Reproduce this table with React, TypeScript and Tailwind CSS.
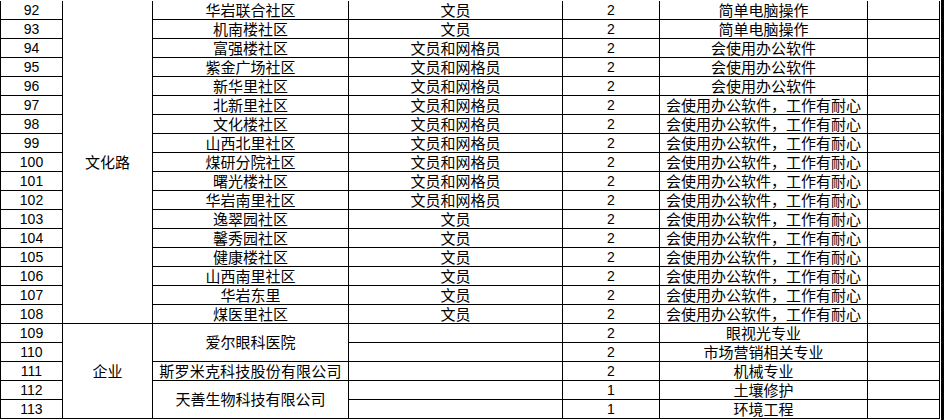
import React from 'react';

const wenhua = [
  ['92', '华岩联合社区', '文员', '2', '简单电脑操作'],
  ['93', '机南楼社区', '文员', '2', '简单电脑操作'],
  ['94', '富强楼社区', '文员和网格员', '2', '会使用办公软件'],
  ['95', '紫金广场社区', '文员和网格员', '2', '会使用办公软件'],
  ['96', '新华里社区', '文员和网格员', '2', '会使用办公软件'],
  ['97', '北新里社区', '文员和网格员', '2', '会使用办公软件，工作有耐心'],
  ['98', '文化楼社区', '文员和网格员', '2', '会使用办公软件，工作有耐心'],
  ['99', '山西北里社区', '文员和网格员', '2', '会使用办公软件，工作有耐心'],
  ['100', '煤研分院社区', '文员和网格员', '2', '会使用办公软件，工作有耐心'],
  ['101', '曙光楼社区', '文员和网格员', '2', '会使用办公软件，工作有耐心'],
  ['102', '华岩南里社区', '文员和网格员', '2', '会使用办公软件，工作有耐心'],
  ['103', '逸翠园社区', '文员', '2', '会使用办公软件，工作有耐心'],
  ['104', '馨秀园社区', '文员', '2', '会使用办公软件，工作有耐心'],
  ['105', '健康楼社区', '文员', '2', '会使用办公软件，工作有耐心'],
  ['106', '山西南里社区', '文员', '2', '会使用办公软件，工作有耐心'],
  ['107', '华岩东里', '文员', '2', '会使用办公软件，工作有耐心'],
  ['108', '煤医里社区', '文员', '2', '会使用办公软件，工作有耐心'],
];

const cell = 'flex items-center justify-center border-r border-b border-black text-[15px] leading-none whitespace-nowrap';
const num = 'flex items-center justify-center border-r border-b border-black text-[14px] leading-none';

export default function App() {
  return (
    <div
      className="flex w-[944px] h-[420px] bg-white text-black overflow-hidden"
      style={{ fontFamily: '"Liberation Sans", "Noto Sans CJK SC", sans-serif' }}
    >
      <div className="pt-px">
        <div className="grid grid-cols-[62px_90px_196px_214px_97px_208px_72px] grid-rows-[repeat(22,19px)] border-l border-black">
          {wenhua.map((r, i) => (
            <React.Fragment key={r[0]}>
              <div className={num}>{r[0]}</div>
              {i === 0 && <div className={`${cell} row-span-17`}>文化路</div>}
              <div className={cell}>{r[1]}</div>
              <div className={cell}>{r[2]}</div>
              <div className={num}>{r[3]}</div>
              <div className={cell}>{r[4]}</div>
              <div className={cell}></div>
            </React.Fragment>
          ))}

          {/* 企业 */}
          <div className={num}>109</div>
          <div className={`${cell} row-span-5`}>企业</div>
          <div className={`${cell} row-span-2`}>爱尔眼科医院</div>
          <div className={cell}></div>
          <div className={num}>2</div>
          <div className={cell}>眼视光专业</div>
          <div className={cell}></div>

          <div className={num}>110</div>
          <div className={cell}></div>
          <div className={num}>2</div>
          <div className={cell}>市场营销相关专业</div>
          <div className={cell}></div>

          <div className={num}>111</div>
          <div className={`${cell} tracking-[0.2px]`}>斯罗米克科技股份有限公司</div>
          <div className={cell}></div>
          <div className={num}>2</div>
          <div className={cell}>机械专业</div>
          <div className={cell}></div>

          <div className={num}>112</div>
          <div className={`${cell} row-span-2`}>天善生物科技有限公司</div>
          <div className={cell}></div>
          <div className={num}>1</div>
          <div className={cell}>土壤修护</div>
          <div className={cell}></div>

          <div className={num}>113</div>
          <div className={cell}></div>
          <div className={num}>1</div>
          <div className={cell}>环境工程</div>
          <div className={cell}></div>
        </div>
      </div>
      <div className="w-px" />
      <div className="w-[3px] h-full bg-black" />
    </div>
  );
}
